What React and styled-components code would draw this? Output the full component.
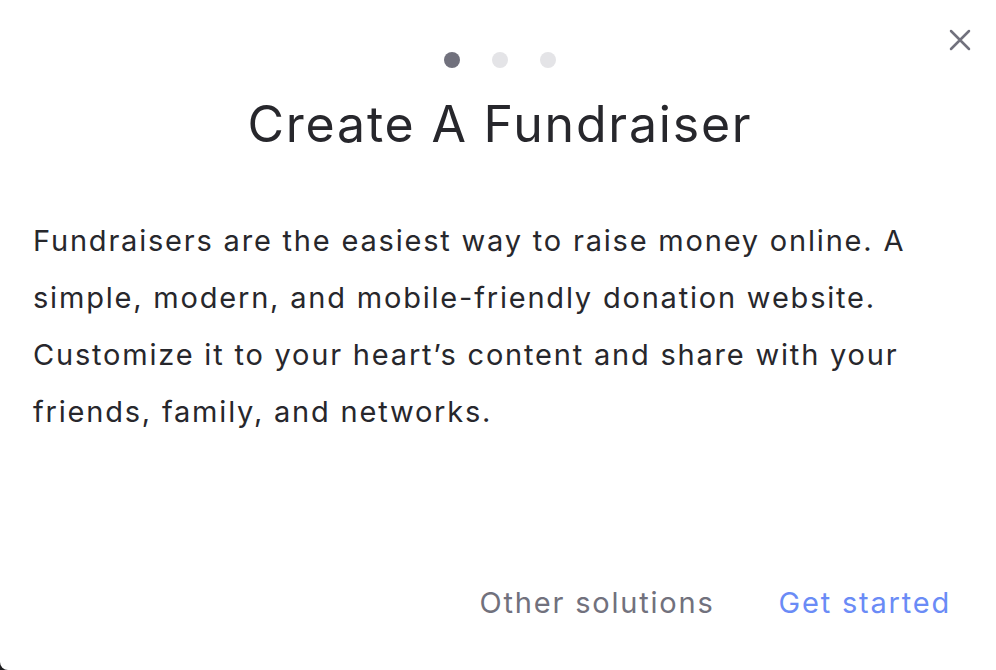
import React from "react";
import styled, { createGlobalStyle } from "styled-components";

const GlobalStyle = createGlobalStyle`
  html, body {
    margin: 0;
    padding: 0;
    background: #1c1c1f;
  }
  * {
    box-sizing: border-box;
  }
`;

const Modal = styled.div`
  position: relative;
  width: 996px;
  height: 670px;
  background: #fff;
  border-bottom-left-radius: 8px;
  display: flex;
  flex-direction: column;
  font-family: Inter, "Noto Sans", sans-serif;
  padding: 52px 29px 0 33px;
`;

const Close = styled.button`
  position: absolute;
  top: 29px;
  right: 25px;
  width: 22px;
  height: 22px;
  padding: 0;
  border: none;
  background: none;
  cursor: pointer;
  svg {
    display: block;
  }
`;

const Dots = styled.div`
  display: flex;
  justify-content: center;
  gap: 32px;
`;

const Dot = styled.span`
  width: 16px;
  height: 16px;
  border-radius: 50%;
  background: ${(p) => (p.active ? "#71717d" : "#e4e4e7")};
`;

const Title = styled.h1`
  margin: 26px 0 0;
  text-align: center;
  font-size: 50px;
  font-weight: 400;
  line-height: 60px;
  color: #27272c;
  letter-spacing: 1.8px;
`;

const Body = styled.p`
  margin: 58px 0 0;
  font-size: 29px;
  line-height: 57px;
  letter-spacing: 1.8px;
  color: #27272c;
`;

const Footer = styled.div`
  margin-top: auto;
  display: flex;
  justify-content: flex-end;
  gap: 64px;
  padding: 0 16px 49px 0;
`;

const Action = styled.button`
  border: none;
  background: none;
  padding: 0;
  font-family: inherit;
  font-size: 29px;
  line-height: 36px;
  letter-spacing: 1.8px;
  color: ${(p) => (p.primary ? "#6a8bf6" : "#71717d")};
  cursor: pointer;
`;

const App = () => {
  const steps = [true, false, false];
  const lines = [
    "Fundraisers are the easiest way to raise money online. A",
    "simple, modern, and mobile-friendly donation website.",
    "Customize it to your heart\u2019s content and share with your",
    "friends, family, and networks.",
  ];
  return (
    <>
      <GlobalStyle />
      <Modal>
        <Close aria-label="Close">
          <svg width="22" height="22" viewBox="0 0 22 22">
            <path
              d="M2 2 L20 20 M20 2 L2 20"
              stroke="#71717d"
              strokeWidth="2.5"
              strokeLinecap="round"
            />
          </svg>
        </Close>
        <Dots>
          {steps.map((active, i) => (
            <Dot key={i} active={active} />
          ))}
        </Dots>
        <Title>Create A Fundraiser</Title>
        <Body>
          {lines.map((line, i) => (
            <React.Fragment key={i}>
              {line}
              {i < lines.length - 1 && <br />}
            </React.Fragment>
          ))}
        </Body>
        <Footer>
          <Action>Other solutions</Action>
          <Action primary>Get started</Action>
        </Footer>
      </Modal>
    </>
  );
};

export default App;
